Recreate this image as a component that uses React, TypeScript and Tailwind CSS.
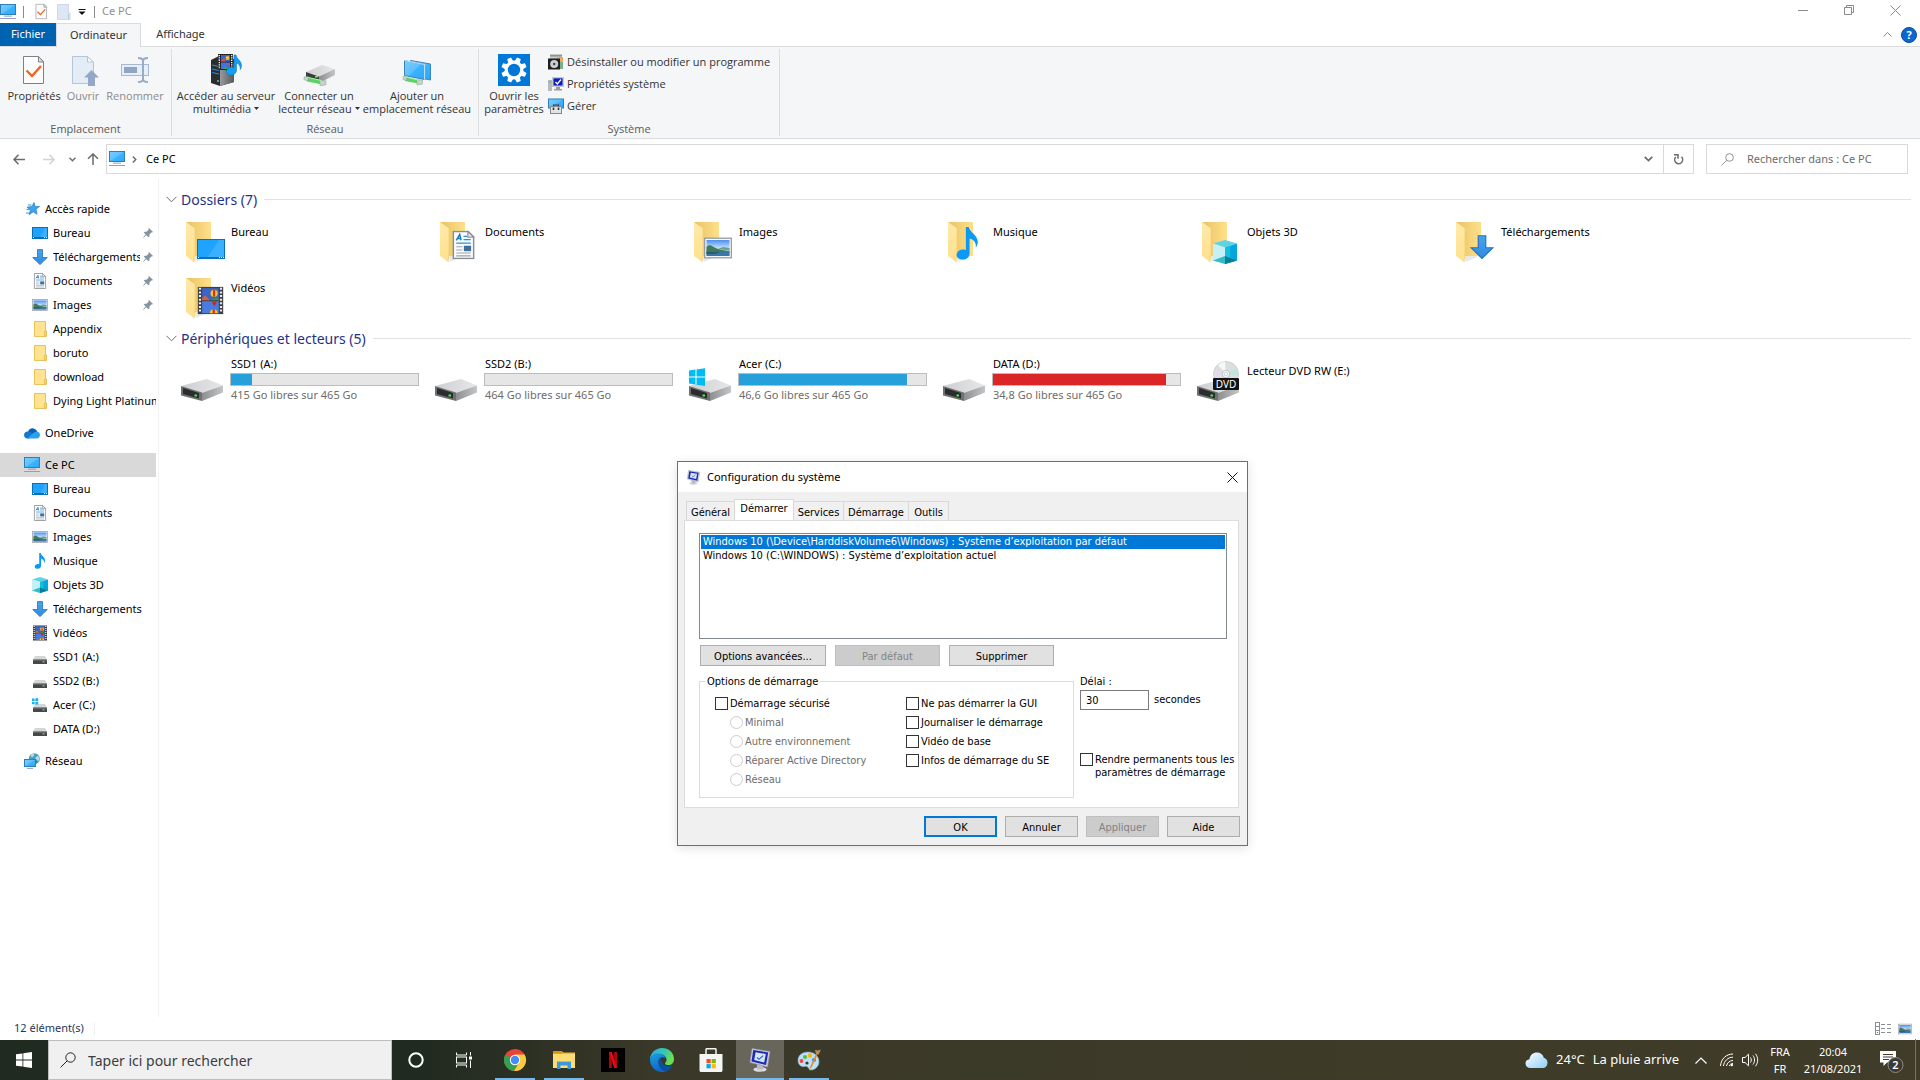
import React from "react";

type Draw = { size?: number };

/* ---------- shared gradients ---------- */

function Gradients() {
  return (
    <svg width="0" height="0" className="absolute" aria-hidden="true">
      <defs>
        <linearGradient id="screen" x1="0" y1="0" x2="1" y2="1">
          <stop offset="0" stopColor="#7cccff" />
          <stop offset="0.5" stopColor="#5cc0ff" />
          <stop offset="0.52" stopColor="#3db3ff" />
          <stop offset="1" stopColor="#2aa7fb" />
        </linearGradient>
        <linearGradient id="folderBack" x1="0" y1="0" x2="1" y2="0">
          <stop offset="0" stopColor="#e9c263" />
          <stop offset="1" stopColor="#ffe08a" />
        </linearGradient>
        <linearGradient id="folderFront" x1="0" y1="0" x2="0" y2="1">
          <stop offset="0" stopColor="#ffeaab" />
          <stop offset="1" stopColor="#ffe08b" />
        </linearGradient>
        <linearGradient id="metalTop" x1="0" y1="0" x2="1" y2="0">
          <stop offset="0" stopColor="#cfcfd1" />
          <stop offset="1" stopColor="#e6e7e9" />
        </linearGradient>
        <linearGradient id="metalSide" x1="0" y1="0" x2="1" y2="0">
          <stop offset="0" stopColor="#8d8e90" />
          <stop offset="1" stopColor="#c4c5c7" />
        </linearGradient>
        <linearGradient id="arrowBlue" x1="0" y1="0" x2="0" y2="1">
          <stop offset="0" stopColor="#4aa3ea" />
          <stop offset="1" stopColor="#2f8ae0" />
        </linearGradient>
        <linearGradient id="sky" x1="0" y1="0" x2="0" y2="1">
          <stop offset="0" stopColor="#4c8ff0" />
          <stop offset="0.55" stopColor="#cfe6fb" />
          <stop offset="1" stopColor="#d9ecf8" />
        </linearGradient>
        <linearGradient id="cloud" x1="0" y1="0" x2="1" y2="1">
          <stop offset="0" stopColor="#ffffff" />
          <stop offset="1" stopColor="#8ccdf5" />
        </linearGradient>
        <linearGradient id="edgeGreen" x1="0" y1="0" x2="1" y2="0.4">
          <stop offset="0" stopColor="#2aa7de" />
          <stop offset="0.6" stopColor="#35c7b4" />
          <stop offset="1" stopColor="#6be04c" />
        </linearGradient>
        <linearGradient id="edgeBlue" x1="0" y1="0" x2="0.4" y2="1">
          <stop offset="0" stopColor="#1b9de2" />
          <stop offset="1" stopColor="#1067c4" />
        </linearGradient>
        <linearGradient id="server" x1="0" y1="0" x2="1" y2="0">
          <stop offset="0" stopColor="#9a9a9c" />
          <stop offset="1" stopColor="#57585a" />
        </linearGradient>
      </defs>
    </svg>
  );
}

/* ---------- 16px icons ---------- */

function Monitor({ size = 16 }: Draw) {
  return (
    <svg width={size} height={size} viewBox="0 0 16 16" className="shrink-0">
      <rect x="0.5" y="0.5" width="15" height="10" fill="url(#screen)" stroke="#2f7fb5" />
      <rect x="4" y="11.6" width="8" height="1" fill="#8c9db5" />
      <rect x="0" y="14" width="16" height="1" fill="#8fa3c0" />
    </svg>
  );
}

function Desktop({ size = 16 }: Draw) {
  return (
    <svg width={size} height={size} viewBox="0 0 16 16" className="shrink-0">
      <rect x="0.5" y="2.5" width="15" height="11" fill="#1ea3ff" stroke="#0a6fb8" />
      <path d="M8 13L13 3h2v10z" fill="#39b1ff" />
      <path d="M1 12.5h14" stroke="#0a6fb8" />
      <path d="M1 12.5h1M12 12.5h1M14 12.5h1" stroke="#fff" />
    </svg>
  );
}

function Download({ size = 16 }: Draw) {
  return (
    <svg width={size} height={size} viewBox="0 0 16 16" className="shrink-0">
      <path d="M5.5 0.5h5v8h4.8L8 15.6 0.7 8.5h4.8z" fill="url(#arrowBlue)" stroke="#2374c4" strokeWidth="0.8" />
    </svg>
  );
}

function Doc({ size = 16 }: Draw) {
  return (
    <svg width={size} height={size} viewBox="0 0 16 16" className="shrink-0">
      <path d="M2.4 0.5h8.2l3 3v12H2.4z" fill="#fbfcfd" stroke="#878d94" strokeWidth="0.8" />
      <path d="M10.4 0.5v3.2h3.2z" fill="#dfe3e8" stroke="#878d94" strokeWidth="0.6" />
      <path d="M4 5.4L5.9 2.2l0.8 3.2M4.6 4.4h2" fill="none" stroke="#1878c8" strokeWidth="0.8" />
      <path d="M8 3.2h2M8 5h4M4 7h8" stroke="#2a8fda" strokeWidth="0.7" />
      <path d="M4 9h3.4M4 10.8h3.4M4 12.4h8M4 14h8" stroke="#9aa1a8" strokeWidth="0.6" />
      <rect x="8.2" y="8.4" width="4" height="3" fill="#3d6f9f" />
    </svg>
  );
}

function Picture({ size = 16 }: Draw) {
  return (
    <svg width={size} height={size} viewBox="0 0 16 16" className="shrink-0">
      <rect x="0.4" y="2.4" width="15.2" height="11.2" fill="#fff" stroke="#8f969c" strokeWidth="0.7" />
      <rect x="1.4" y="3.4" width="13.2" height="9.2" fill="url(#sky)" />
      <path d="M1.4 7.4c1.2-1.4 2.4-1.2 3.600-0.200 2 1.400 5 2 9.600 2.600v0.800H1.4z" fill="#3f7a5a" />
      <path d="M8 8.400l3-1 3.600 0.600v1.600z" fill="#6d9c93" />
      <rect x="1.4" y="10" width="13.2" height="2.600" fill="#3a76a8" />
      <path d="M1.4 10.200h8l-3 1.200h-5z" fill="#2c5f66" />
    </svg>
  );
}

function SmallFolder() {
  return (
    <svg width="16" height="16" viewBox="0 0 16 16" className="shrink-0">
      <path d="M2.5 0.5h11v9.5h1v5.5H2.5z" fill="#ffe391" stroke="#e8c35a" />
      <path d="M12.5 15V10.5h1.5V15z" fill="#fff0bd" stroke="#e3b94a" strokeWidth="0.8" />
    </svg>
  );
}

function Music({ size = 16 }: Draw) {
  return (
    <svg width={size} height={size} viewBox="0 0 16 16" className="shrink-0">
      <path d="M7.2 0h1.4c0.3 2.4 4.4 4 4.4 7.2 0 1.2-0.5 2.2-1 3 0.3-2.4-0.7-4-3-4.6v7.2c0 1.8-1.4 3-3.3 3-1.8 0-3-0.9-3-2.3 0-1.6 1.6-2.6 3.3-2.6 0.5 0 0.8 0 1.2 0.2z" fill="#0a9af5" />
    </svg>
  );
}

function Cube({ size = 16 }: Draw) {
  return (
    <svg width={size} height={size} viewBox="0 0 16 16" className="shrink-0">
      <path d="M8 0l8 2.4L8 5 0 2.4z" fill="#5fd3e4" />
      <path d="M0 2.4L8 5v8.4L8 16l-8-2.4z" fill="#c6f1f4" />
      <path d="M16 2.4L8 5v11l8-2.4z" fill="#07a5de" />
      <path d="M8 5l3.5-1.1v8.4L8 11z" fill="#13bfe0" />
      <path d="M8 10.6l8 3L8 16l-8-2.4z" fill="#36b9c9" />
      <path d="M8 10.6l8 3L8 16z" fill="#077f96" />
    </svg>
  );
}

function Film({ size = 16 }: Draw) {
  return (
    <svg width={size} height={size} viewBox="0 0 16 16" className="shrink-0">
      <rect x="1" y="0.5" width="14" height="15" fill="#3f3f40" />
      <path d="M2.2 1v14M13.8 1v14" stroke="#e9e9e9" strokeWidth="1.2" strokeDasharray="1.1 0.9" />
      <rect x="3.4" y="1.2" width="9.200" height="6.6" fill="#3c63c8" />
      <rect x="3.4" y="8.4" width="9.200" height="6.6" fill="#4a7be0" />
      <path d="M3.4 6.6l1.600-1.200 1.400 1 1.200 1.400H3.4z" fill="#d8632f" />
      <path d="M8 7.800c1-1 3-1.200 4.600-0.800v0.800z" fill="#2e9c45" />
      <circle cx="10" cy="4" r="2" fill="#f5c62a" />
      <path d="M9.400 2.100h1.2v3.8H9.400z" fill="#cf3322" />
      <path d="M8.600 8.6h3l-1.400 2.6z" fill="#c22a1e" />
      <path d="M7.600 15c0-1.400 1-2.200 2.200-2.200s2.200 0.800 2.200 2.200z" fill="#f5c62a" />
      <path d="M9.200 12.8h1.2V15H9.200z" fill="#cf3322" />
    </svg>
  );
}

function SmallDrive({ windows = false }: { windows?: boolean }) {
  return (
    <svg width="16" height="16" viewBox="0 0 16 16" className="shrink-0">
      <path d="M3 7h10l2 4H1z" fill="#d5d6d8" />
      <rect x="1" y="10.5" width="14" height="4.5" rx="0.6" fill="#47484a" />
      <rect x="1" y="10.5" width="14" height="0.9" fill="#8a8b8d" />
      <rect x="10.6" y="12.2" width="1.8" height="1.2" fill="#5df05a" />
      {windows && <path d="M0 1.4h2.6V4H0zM3.4 1.2h2.8V4H3.4zM0 4.8h2.6v2.4H0zM3.4 4.8h2.8v2.6H3.4z" fill="#13b4ee" />}
    </svg>
  );
}

function Network() {
  return (
    <svg width="16" height="16" viewBox="0 0 16 16" className="shrink-0">
      <circle cx="10.3" cy="5.7" r="5.5" fill="#4b9cbd" />
      <path d="M6.5 2.2c1.4-1.6 3-2 4-2l-0.8 3-2 1.4zM11 5l3-2.5 1.4 2.8-1.2 3z" fill="#b4dbe6" />
      <path d="M10 7.5l3 0.5-0.6 2.4z" fill="#2c6f96" />
      <rect x="0.5" y="6.5" width="11" height="7" fill="url(#screen)" stroke="#2f7fb5" />
      <path d="M3 15.4h6" stroke="#8fa3c0" />
    </svg>
  );
}

function QuickStar() {
  return (
    <svg width="16" height="16" viewBox="0 0 16 16" className="shrink-0">
      <path d="M10 1.500l1 3.900h4.600l-3.600 2.800 1 5-3.800-2.400-4 3 1.200-4.800L3 6.200l4.800-0.600z" fill="#3aa5ec" stroke="#1f7cc4" strokeWidth="0.7" />
      <path d="M4 4h3.500M2.500 8.400h3M2 12h3.500" stroke="#2f93dc" />
    </svg>
  );
}

function OneDrive() {
  return (
    <svg width="16" height="16" viewBox="0 0 16 16" className="shrink-0">
      <path d="M4 6.6C5 4.2 7.2 3 9.4 3.4c2 0.3 3.4 1.7 4 3.4L8 10z" fill="#0a5fb4" />
      <path d="M0 10c0-2.2 1.8-3.8 4-3.6 1-0.1 2 0.3 3 1l4.6 3L5 13.4H3.4C1.4 13.4 0 12 0 10z" fill="#1677cf" />
      <path d="M13.2 6.7c1.6 0.2 2.8 1.5 2.8 3.3 0 1.9-1.4 3.4-3.3 3.4H3.2L9 8.2c1-1 2.4-1.7 4.2-1.5z" fill="#28a0ea" />
    </svg>
  );
}

function Pin() {
  return (
    <svg width="10" height="10" viewBox="0 0 10 10" className="shrink-0">
      <path d="M6 0l4 4-1 0.6L8.4 4.4 6.4 6.6v1.9l-0.9 0.7L3.5 7.2 0.4 9.8 0 9.6 2.7 6.4 0.8 4.6l0.8-0.9h1.9L5.6 1.7 5.4 0.8z" fill="#8494a0" />
    </svg>
  );
}

function Magnifier({ size, color }: { size: number; color: string }) {
  return (
    <svg width={size} height={size} viewBox="0 0 16 16" className="shrink-0" fill="none" stroke={color}>
      <circle cx="10.5" cy="5.5" r="4.7" />
      <path d="M7 9L0.6 15.4" />
    </svg>
  );
}

function CheckDoc({ size = 16 }: Draw) {
  return (
    <svg width={size} height={size} viewBox="0 0 32 32" className="shrink-0">
      <path d="M5.5 2.5h15l5 5v22h-20z" fill="#fcfcfd" stroke="#7d8084" />
      <path d="M20.5 2.5V8h5z" fill="#e3e5e8" stroke="#7d8084" />
      <path d="M8.5 16.5l5.5 5.500L23 12" fill="none" stroke="#f4631e" strokeWidth="2.4" />
    </svg>
  );
}

/* ---------- ribbon icons ---------- */

function OpenIcon() {
  return (
    <svg width="32" height="32" viewBox="0 0 32 32">
      <path d="M5.5 2.5h15l6 6v21h-21z" fill="#e4ecf6" stroke="#b3c4dc" />
      <path d="M20.5 2.5V8h6z" fill="#fff" stroke="#b3c4dc" />
      <path d="M24.5 16l7.5 7.5h-4V32h-7v-8.5h-4z" fill="#93a8c6" />
    </svg>
  );
}

function RenameIcon() {
  return (
    <svg width="32" height="32" viewBox="0 0 32 32" fill="none">
      <rect x="2.5" y="10.5" width="27" height="11" fill="#e7eef7" stroke="#a6b9d4" />
      <rect x="5" y="13" width="13" height="6" fill="#8fa5c4" />
      <path d="M19 4c3.5 0 5 0.5 5 3v18c0 2.5-1.5 3-5 3M29 4c-3.5 0-5 0.5-5 3v18c0 2.5 1.5 3 5 3" stroke="#98abc8" strokeWidth="2" />
    </svg>
  );
}

function MediaServerIcon() {
  return (
    <svg width="32" height="32" viewBox="0 0 32 32">
      <path d="M1 6l8-4 15 3v23l-14 4-9-3z" fill="#2b2c2e" />
      <path d="M10 13l14-4v19l-14 4z" fill="url(#server)" />
      <path d="M2 11l7 1.5M2 15l7 1.5M2 18.5l7 1.5" stroke="#1f8fe8" strokeWidth="1.2" />
      <circle cx="8" cy="27" r="0.9" fill="#4cd9ff" />
      <rect x="8" y="0" width="15" height="16" fill="#252525" />
      <path d="M9.3 1v14M21.7 1v14" stroke="#f0f0f0" strokeWidth="1.4" strokeDasharray="1.3 1" />
      <rect x="11" y="1" width="9" height="6.5" fill="#3765d6" />
      <rect x="11" y="8.5" width="9" height="6.5" fill="#3d74e2" />
      <path d="M11 6l3-2 2 3.5h-5zM16 9h3l-1.5 3z" fill="#e34831" />
      <circle cx="17.5" cy="4" r="1.9" fill="#f6c529" />
      <path d="M13 15l2-2 3 2z" fill="#3fae4a" />
      <path d="M24 1h2c0.5 4 5.5 5.5 5.5 10.5 0 1.5-0.5 2.8-1.2 4C30.500 12 29 9.5 26.500 9v7c0 3-2.400 5-5.400 5-2.700 0-4.600-1.300-4.600-3.400 0-2.600 2.600-4.200 5.200-4.200 0.900 0 1.600 0.200 2.300 0.500z" fill="#159ff2" stroke="#0b7ccb" strokeWidth="0.6" />
    </svg>
  );
}

function MapDriveIcon() {
  return (
    <svg width="32" height="32" viewBox="0 0 32 32">
      <path d="M3 18l16-7 13 4-15 7.5z" fill="url(#metalTop)" />
      <path d="M3 18l13 4.5v7L3 25z" fill="#3c3d3f" />
      <path d="M16 22.5L32 15v6l-16 8z" fill="url(#metalSide)" />
      <rect x="12" y="22" width="3" height="1.5" fill="#5df05a" />
      <path d="M3 23l14 3v4L4 27.5z" fill="#5bd263" />
      <path d="M1 23l4-0.6v4.4l-4-1zM17 26l6 0.8v4L17 32z" fill="#c8d3cb" stroke="#8ba391" strokeWidth="0.5" />
      <path d="M5 23.4l13 3" stroke="#b7f0b8" />
    </svg>
  );
}

function AddPlaceIcon() {
  return (
    <svg width="32" height="32" viewBox="0 0 32 32">
      <path d="M9.500 6.500l20 3.500v16l-20-4z" fill="url(#screen)" stroke="#3a86b8" />
      <path d="M3.500 6.500l20 4v15l-20-4z" fill="url(#screen)" stroke="#3a86b8" />
      <path d="M3.500 6.500l20 4v15" fill="none" stroke="#e6f5ff" strokeWidth="0.8" />
      <path d="M4 22.5l13 3v4l-13-2.5z" fill="#5bd263" />
      <path d="M2 22.5l3.5-0.5v4.4L2 25.5zM16 25.5l5.5 0.8v3.7L16 31z" fill="#c8d3cb" stroke="#8ba391" strokeWidth="0.5" />
      <path d="M5 23l12 3" stroke="#b7f0b8" />
    </svg>
  );
}

function GearTile() {
  return (
    <svg width="32" height="32" viewBox="0 0 32 32">
      <rect width="32" height="32" fill="#0078d7" />
      <g fill="#fff">
        {[22.5, 67.5, 112.5, 157.5, 202.5, 247.5, 292.5, 337.5].map((a) => (
          <path key={a} d="M13.2 8l0.8-4.700h4L18.8 8z" transform={`rotate(${a} 16 16)`} />
        ))}
      </g>
      <circle cx="16" cy="16" r="7.8" fill="none" stroke="#fff" strokeWidth="3.2" />
    </svg>
  );
}

function UninstallIcon() {
  return (
    <svg width="16" height="16" viewBox="0 0 16 16">
      <path d="M2 0h12v6H2z" fill="#c8cac9" />
      <path d="M2 1h12v1.5H2z" fill="#8f9492" />
      <path d="M9 3h6v12H9z" fill="#f0a95a" />
      <path d="M12 8h3v7h-3z" fill="#7fae8c" />
      <rect x="0" y="4.5" width="12" height="11" fill="#1e1f20" />
      <circle cx="6.2" cy="10" r="4" fill="#cdd0d2" />
      <circle cx="6.2" cy="10" r="1.2" fill="#3b3c3d" />
    </svg>
  );
}

function SystemIcon() {
  return (
    <svg width="16" height="16" viewBox="0 0 16 16">
      <rect x="0" y="4" width="4" height="11" fill="#b7b9bc" />
      <path d="M1 6h2" stroke="#37c84a" />
      <rect x="4" y="1" width="12" height="10" fill="#c7c9cd" />
      <rect x="5.5" y="2.3" width="9" height="7.2" fill="#0f1ac2" />
      <path d="M7.500 6l1.800 2 3.700-4.500" stroke="#fff" strokeWidth="1.3" fill="none" />
      <path d="M8 11h4v2h2v1.5H6V13h2z" fill="#9b9da1" />
    </svg>
  );
}

function ManageIcon() {
  return (
    <svg width="16" height="16" viewBox="0 0 16 16">
      <rect x="0.5" y="1" width="15" height="9" fill="url(#screen)" stroke="#2f7fb5" />
      <path d="M5.5 8.5V7h5v1.5" fill="none" stroke="#3a3d40" strokeWidth="1.2" />
      <rect x="2.5" y="8.5" width="11" height="7" fill="#e1e4e6" stroke="#84898e" />
      <path d="M5.5 9.5v2.5M10.5 9.5v2.5" stroke="#33363a" strokeWidth="1.6" />
    </svg>
  );
}

/* ---------- 48px icons ---------- */

function BigFolder({ children }: { children: React.ReactNode }) {
  return (
    <svg width="48" height="48" viewBox="0 0 48 48" className="shrink-0">
      <path d="M14 38h15l-13 6z" fill="#e9e9e9" />
      <path d="M6 4h25v34H12z" fill="url(#folderBack)" />
      <path d="M6 4l9 6.5v24.5l-1 9L6 38z" fill="url(#folderFront)" />
      <path d="M15 10.5v25l-1 8.5" fill="none" stroke="#f3cf72" strokeWidth="0.8" />
      {children}
    </svg>
  );
}

function BigDrive({ windows = false, dvd = false }: { windows?: boolean; dvd?: boolean }) {
  return (
    <svg width="48" height="48" viewBox="0 0 48 48" className="shrink-0">
      <path d="M1 29l26-7 16 6.5-21 9z" fill="url(#metalTop)" />
      <path d="M1 29l21 6.5V44L1 38.5z" fill="#6f7072" />
      <path d="M3 31l16 5v5.5L3 37z" fill="#2b2c2d" />
      <path d="M22 36l21-7.5v7L22 44z" fill="url(#metalSide)" />
      <rect x="14.5" y="37.5" width="2.5" height="2" fill="#4af04a" />
      {windows && <path d="M1 13.5l6.5-0.9v7H1zM8.5 12.5l8.5-1.2v8.3H8.5zM1 20.5h6.5v7L1 26.6zM8.5 20.5H17V29l-8.5-1.2z" fill="#00bcf2" />}
      {dvd && (
        <>
          <circle cx="30" cy="17" r="12.5" fill="#dcdfe0" stroke="#b9bcbe" strokeWidth="0.6" />
          <path d="M30 17L22 8a12 12 0 0 1 7-3.3z" fill="#f7f7f8" />
          <path d="M30 17l10-6a12 12 0 0 1 2 7z" fill="#bfe8dd" />
          <path d="M30 17L18.5 14a12 12 0 0 0 0 6z" fill="#e7d8ee" />
          <circle cx="30" cy="17" r="3.8" fill="#f2f3f3" stroke="#b4b7b9" strokeWidth="0.8" />
          <circle cx="30" cy="17" r="1.6" fill="#fff" stroke="#b4b7b9" strokeWidth="0.6" />
          <rect x="17" y="21" width="26" height="12" rx="1" fill="#131313" />
          <text x="30" y="31" textAnchor="middle" fontSize="10" fill="#fff" fontFamily="Noto Sans, sans-serif">DVD</text>
        </>
      )}
    </svg>
  );
}

/* ---------- system configuration glyph ---------- */

function ConfigIcon({ size = 16 }: Draw) {
  return (
    <svg width={size} height={size} viewBox="0 0 24 24" className="shrink-0">
      <ellipse cx="12" cy="21.5" rx="6.5" ry="2.3" fill="#d9dbe0" />
      <path d="M9 16l6 1v4.5H9z" fill="#b8bbc2" />
      <path d="M4 0.500l18 3-2.500 15.500L2 14.5z" fill="#ccd0da" stroke="#9397a6" strokeWidth="0.6" />
      <path d="M5.200 2l15 2.500-2.200 12.500L3.500 13.500z" fill="#1d28b4" />
      <path d="M7.600 4.300l10.200 1.700-1.600 8.500L6.200 12z" fill="#d6e6fa" />
      <path d="M9 9.500l2 1.700 4.200-3.600" fill="none" stroke="#2a63d0" strokeWidth="1.100" />
    </svg>
  );
}

/* ---------- ribbon ---------- */

function RibbonButton({ icon, lines, width, disabled, menu }: { icon: React.ReactNode; lines: string[]; width: string; disabled?: boolean; menu?: boolean }) {
  return (
    <button disabled={disabled} className={`flex flex-col items-center whitespace-nowrap ${width} ${disabled ? "text-[#8b8b8b]" : "text-[#333]"}`}>
      <span className="mb-[3px] block h-8 w-8">{icon}</span>
      {lines.map((l, i) => (
        <span key={l} className="flex h-[13px] items-center gap-[3px] leading-[13px]">
          {l}
          {menu && i === lines.length - 1 && (
            <svg width="5" height="3" viewBox="0 0 5 3"><path d="M0 0h5L2.5 3z" fill="#333" /></svg>
          )}
        </span>
      ))}
    </button>
  );
}

function RibbonGroup({ label, children, width, inset }: { label: string; children: React.ReactNode; width: string; inset: string }) {
  return (
    <section className={`my-[2px] flex flex-col border-r border-[#dcdddf] ${width}`}>
      <div className={`flex flex-1 pt-[5px] ${inset}`}>{children}</div>
      <div className="h-[15px] text-center leading-[15px] text-[#5a5a5a]">{label}</div>
    </section>
  );
}

function SmallCommand({ icon, label }: { icon: React.ReactNode; label: string }) {
  return (
    <button className="flex h-[22px] items-center gap-[3px] whitespace-nowrap text-[#333]">
      {icon}
      {label}
    </button>
  );
}

/* ---------- navigation pane ---------- */

type NavEntry = { label: string; icon: React.ReactNode; root?: boolean; pinned?: boolean; selected?: boolean };

const navGroups: NavEntry[][] = [
  [
    { label: "Accès rapide", icon: <QuickStar />, root: true },
    { label: "Bureau", icon: <Desktop />, pinned: true },
    { label: "Téléchargements", icon: <Download />, pinned: true },
    { label: "Documents", icon: <Doc />, pinned: true },
    { label: "Images", icon: <Picture />, pinned: true },
    { label: "Appendix", icon: <SmallFolder /> },
    { label: "boruto", icon: <SmallFolder /> },
    { label: "download", icon: <SmallFolder /> },
    { label: "Dying Light Platinum", icon: <SmallFolder /> },
  ],
  [{ label: "OneDrive", icon: <OneDrive />, root: true }],
  [
    { label: "Ce PC", icon: <Monitor />, root: true, selected: true },
    { label: "Bureau", icon: <Desktop /> },
    { label: "Documents", icon: <Doc /> },
    { label: "Images", icon: <Picture /> },
    { label: "Musique", icon: <Music /> },
    { label: "Objets 3D", icon: <Cube /> },
    { label: "Téléchargements", icon: <Download /> },
    { label: "Vidéos", icon: <Film /> },
    { label: "SSD1 (A:)", icon: <SmallDrive /> },
    { label: "SSD2 (B:)", icon: <SmallDrive /> },
    { label: "Acer (C:)", icon: <SmallDrive windows /> },
    { label: "DATA (D:)", icon: <SmallDrive /> },
  ],
  [{ label: "Réseau", icon: <Network />, root: true }],
];

function NavPane() {
  return (
    <nav className="flex w-[159px] shrink-0 flex-col gap-2 border-r border-[#f2f2f2] pt-[18px] pr-[2px]">
      {navGroups.map((g, i) => (
        <ul key={i}>
          {g.map((n) => (
            <li key={n.label}>
              <a href="#" className={`flex h-6 items-center gap-[5px] whitespace-nowrap ${n.root ? "pl-6" : "pl-8"} ${n.selected ? "bg-[#d9d9d9]" : ""}`}>
                {n.icon}
                <span className="flex-1 overflow-hidden">{n.label}</span>
                {n.pinned && <span className="mr-[3px] ml-[-2px]"><Pin /></span>}
              </a>
            </li>
          ))}
        </ul>
      ))}
    </nav>
  );
}

/* ---------- content ---------- */

const folders: { label: string; icon: React.ReactNode }[] = [
  {
    label: "Bureau",
    icon: (
      <BigFolder>
        <rect x="17.5" y="21.5" width="27" height="19" fill="#1ea3ff" stroke="#0a6fb8" />
        <path d="M27 40L39 22h5v18z" fill="#39b1ff" />
        <path d="M18 39.5h26" stroke="#0a6fb8" />
        <path d="M18 39.5h1M39 39.5h1M41 39.5h1M43 39.5h1" stroke="#fff" />
      </BigFolder>
    ),
  },
  { label: "Documents", icon: <BigFolder><g transform="translate(15 12.5)"><Doc size={29} /></g></BigFolder> },
  { label: "Images", icon: <BigFolder><g transform="translate(16 16)"><Picture size={28} /></g></BigFolder> },
  { label: "Musique", icon: <BigFolder><g transform="translate(9 9)"><Music size={33} /></g></BigFolder> },
  { label: "Objets 3D", icon: <BigFolder><g transform="translate(17 22)"><Cube size={24} /></g></BigFolder> },
  { label: "Téléchargements", icon: <BigFolder><g transform="translate(20 17)"><Download size={24} /></g></BigFolder> },
  { label: "Vidéos", icon: <BigFolder><g transform="translate(16 12)"><Film size={29} /></g></BigFolder> },
];

const drives = [
  { label: "SSD1 (A:)", info: "415 Go libres sur 465 Go", used: 11, fill: "bg-[#26a0da]" },
  { label: "SSD2 (B:)", info: "464 Go libres sur 465 Go", used: 0, fill: "bg-[#26a0da]" },
  { label: "Acer (C:)", info: "46,6 Go libres sur 465 Go", used: 90, fill: "bg-[#26a0da]", windows: true },
  { label: "DATA (D:)", info: "34,8 Go libres sur 465 Go", used: 92.5, fill: "bg-[#da2626]" },
];

function GroupHeader({ label }: { label: string }) {
  return (
    <h2 className="flex h-6 items-center pr-[9px] pl-[7px] text-[14px] text-[#1e3287]">
      <svg width="11" height="7" viewBox="0 0 11 7" className="mr-1 shrink-0"><path d="M0.5 0.8l5 5 5-5" fill="none" stroke="#6d6d6d" /></svg>
      <span className="whitespace-nowrap">{label}</span>
      <span className="ml-[7px] h-px flex-1 bg-[#e2e2e2]" />
    </h2>
  );
}

function Content() {
  return (
    <main className="min-w-0 flex-1 pt-2">
      <GroupHeader label="Dossiers (7)" />
      <ul className="mt-[3px] grid grid-cols-[repeat(auto-fill,254px)] pl-[21px]">
        {folders.map((f) => (
          <li key={f.label} className="flex h-14 pt-1">
            {f.icon}
            <span className="pt-[6px] pl-[3px] leading-4">{f.label}</span>
          </li>
        ))}
      </ul>
      <GroupHeader label="Périphériques et lecteurs (5)" />
      <ul className="mt-[3px] grid grid-cols-[repeat(auto-fill,254px)] pl-[21px]">
        {drives.map((d) => (
          <li key={d.label} className="flex h-14 pt-1">
            <BigDrive windows={d.windows} />
            <div className="-mt-px ml-[2px] w-[189px]">
              <div className="pl-px leading-4">{d.label}</div>
              <div className="mt-px h-[13px] border border-[#bcbcbc] bg-[#e6e6e6]">
                <div className={`h-full ${d.fill}`} style={{ width: `${d.used}%` }} />
              </div>
              <div className="mt-px pl-px leading-4 text-[#6d6d6d]">{d.info}</div>
            </div>
          </li>
        ))}
        <li className="flex h-14 pt-1">
          <BigDrive dvd />
          <span className="pt-[6px] pl-[3px] leading-4">Lecteur DVD RW (E:)</span>
        </li>
      </ul>
    </main>
  );
}

/* ---------- system configuration window ---------- */

function DialogButton({ label, width, disabled, primary }: { label: string; width: string; disabled?: boolean; primary?: boolean }) {
  return (
    <button
      disabled={disabled}
      className={`h-[21px] pt-[2px] leading-[15px] whitespace-nowrap ${width} ${disabled ? "border border-[#bfbfbf] bg-[#cccccc] text-[#838383]" : primary ? "border-2 border-[#0078d7] bg-[#e1e1e1]" : "border border-[#adadad] bg-[#e1e1e1]"}`}
    >
      {label}
    </button>
  );
}

function Check({ label }: { label: string }) {
  return (
    <label className="flex items-start gap-[2px] leading-[13px]">
      <input type="checkbox" className="h-[13px] w-[13px] shrink-0 appearance-none border border-[#333] bg-white" />
      <span className="whitespace-pre">{label}</span>
    </label>
  );
}

function DisabledRadio({ label }: { label: string }) {
  return (
    <label className="ml-[15px] flex items-start gap-[2px] leading-[13px] text-[#6d6d6d]">
      <input type="radio" name="safe-boot" disabled className="h-[13px] w-[13px] shrink-0 appearance-none rounded-full border border-[#cccccc] bg-white" />
      <span className="whitespace-nowrap">{label}</span>
    </label>
  );
}

function ConfigDialog() {
  const tab = "h-[19px] border border-[#d9d9d9] bg-[#f0f0f0] pt-[2px] leading-[15px]";
  return (
    <section
      role="dialog"
      aria-label="Configuration du système"
      className="absolute top-[461px] left-[677px] w-[571px] border border-[#6f6f6f] bg-[#f0f0f0] pb-2 font-['DejaVu_Sans_Condensed','Liberation_Sans',sans-serif] text-[11px] shadow-[0_2px_10px_rgba(0,0,0,0.12)]"
    >
      <header className="flex h-[30px] items-center bg-white pr-[9px] pl-2 font-['Noto_Sans',sans-serif] text-[11px]">
        <ConfigIcon size={15} />
        <h1 className="ml-[6px] flex-1">Configuration du système</h1>
        <button aria-label="Fermer">
          <svg width="11" height="11" viewBox="0 0 11 11"><path d="M0.5 0.5l10 10M10.5 0.5l-10 10" stroke="#111" /></svg>
        </button>
      </header>

      <div role="tablist" className="mt-[7px] flex h-[21px] items-end pl-2">
        <button role="tab" className={`w-[48px] border-r-0 border-b-0 ${tab}`}>Général</button>
        <button role="tab" aria-selected="true" className="z-10 h-[21px] w-[60px] border border-b-0 border-[#d9d9d9] bg-white pb-px">Démarrer</button>
        <button role="tab" className={`w-[50px] border-b-0 border-l-0 ${tab}`}>Services</button>
        <button role="tab" className={`w-[65px] border-b-0 border-l-0 ${tab}`}>Démarrage</button>
        <button role="tab" className={`w-[40px] border-b-0 border-l-0 ${tab}`}>Outils</button>
      </div>

      <div className="mr-2 ml-[6px] border border-[#dcdcdc] bg-white px-[11px] pt-3 pb-[9px]">
        <ul role="listbox" aria-label="Systèmes" className="ml-[3px] h-[106px] border border-[#828790] p-px">
          <li role="option" aria-selected="true" className="h-[14px] bg-[#0078d7] pl-[2px] leading-[14px] whitespace-nowrap text-white">
            Windows 10 (\Device\HarddiskVolume6\Windows) : Système d’exploitation par défaut
          </li>
          <li role="option" aria-selected="false" className="h-[13px] pl-[2px] leading-[13px] whitespace-nowrap">
            Windows 10 (C:\WINDOWS) : Système d’exploitation actuel
          </li>
        </ul>

        <div className="mt-[6px] ml-[4px] flex gap-[9px]">
          <DialogButton label="Options avancées..." width="w-[126px]" />
          <DialogButton label="Par défaut" width="w-[105px]" disabled />
          <DialogButton label="Supprimer" width="w-[105px]" />
        </div>

        <div className="mt-[9px] ml-[3px] flex">
          <fieldset className="flex h-[123px] w-[375px] shrink-0 border border-[#dcdcdc] pl-[15px]">
            <legend className="-ml-[10px] px-[2px] leading-[13px]">Options de démarrage</legend>
            <div className="flex w-[191px] flex-col gap-[6px] pt-[9px]">
              <Check label="Démarrage sécurisé" />
              <DisabledRadio label="Minimal" />
              <DisabledRadio label="Autre environnement" />
              <DisabledRadio label="Réparer Active Directory" />
              <DisabledRadio label="Réseau" />
            </div>
            <div className="flex flex-col gap-[6px] pt-[9px]">
              <Check label="Ne pas démarrer la GUI" />
              <Check label="Journaliser le démarrage" />
              <Check label="Vidéo de base" />
              <Check label="Infos de démarrage du SE" />
            </div>
          </fieldset>
          <div className="ml-[6px]">
            <label htmlFor="delay" className="block leading-[13px]">Délai :</label>
            <div className="mt-[2px] flex items-center gap-[5px]">
              <input id="delay" defaultValue="30" className="h-5 w-[69px] border border-[#7a7a7a] bg-white pl-[5px]" />
              secondes
            </div>
            <div className="mt-[43px]">
              <Check label={"Rendre permanents tous les\nparamètres de démarrage"} />
            </div>
          </div>
        </div>
      </div>

      <footer className="mt-2 flex justify-end gap-2 pr-[7px]">
        <DialogButton label="OK" width="w-[73px]" primary />
        <DialogButton label="Annuler" width="w-[73px]" />
        <DialogButton label="Appliquer" width="w-[73px]" disabled />
        <DialogButton label="Aide" width="w-[73px]" />
      </footer>
    </section>
  );
}

/* ---------- taskbar ---------- */

function TaskButton({ label, children, state }: { label: string; children: React.ReactNode; state?: "open" | "active" }) {
  return (
    <button aria-label={label} className={`relative flex h-10 w-12 items-center justify-center ${state === "active" ? "bg-[#68665a]" : ""}`}>
      {children}
      {state && <span className={`absolute bottom-0 h-[2px] bg-[#76b9ed] ${state === "active" ? "inset-x-0" : "inset-x-1"}`} />}
    </button>
  );
}

function Taskbar() {
  return (
    <footer className="flex h-10 shrink-0 items-center bg-linear-to-r from-[#212a20] from-22% via-[#3a3828] via-34% to-[#403c29] text-white">
      <button aria-label="Démarrer" className="flex h-10 w-12 items-center justify-center">
        <svg width="16" height="16" viewBox="0 0 16 16"><path d="M0 2.3l6.5-0.9v6.1H0zM7.3 1.3L16 0v7.5H7.3zM0 8.4h6.5v6.1L0 13.7zM7.3 8.4H16V16l-8.7-1.3z" fill="#fff" /></svg>
      </button>
      <label className="flex h-10 w-[344px] items-center gap-3 border border-[#bdbdbd] bg-[#f0f0f0] pl-[11px]">
        <Magnifier size={16} color="#222" />
        <input aria-label="Rechercher" placeholder="Taper ici pour rechercher" className="w-full bg-transparent text-[14px] placeholder:text-[#3c3c3c]" />
      </label>
      <TaskButton label="Cortana">
        <svg width="16" height="16" viewBox="0 0 16 16"><circle cx="8" cy="8" r="6.7" fill="none" stroke="#fff" strokeWidth="2" /></svg>
      </TaskButton>
      <TaskButton label="Affichage des tâches">
        <svg width="16" height="16" viewBox="0 0 16 16" fill="none" stroke="#fff">
          <path d="M0.5 0.5V3h10V0.5M0.5 15.5V13h10v2.5M14.5 0v3.5M14.5 8.5V16" />
          <rect x="0.5" y="5" width="10" height="6" />
          <rect x="13" y="4.5" width="3" height="3" fill="#fff" stroke="none" />
        </svg>
      </TaskButton>
      <div className="ml-[3px] flex gap-px">
        <TaskButton label="Chrome" state="open">
          <svg width="24" height="24" viewBox="0 0 24 24">
            <circle cx="12" cy="12" r="11" fill="#e8443a" />
            <path d="M12 12L2.5 6.5A11 11 0 0 0 11 23l5-8.500z" fill="#30a252" />
            <path d="M12 12V6.500h9.500A11 11 0 0 1 11 23l5.500-9z" fill="#fbcd3b" />
            <circle cx="12" cy="12" r="5.2" fill="#fff" />
            <circle cx="12" cy="12" r="4.2" fill="#4a8af4" />
          </svg>
        </TaskButton>
        <TaskButton label="Explorateur de fichiers" state="open">
          <svg width="24" height="24" viewBox="0 0 24 24">
            <path d="M1 4V3h8.5l2 1.5H23V20H1z" fill="#f0b63d" />
            <path d="M1 3h8.5l1 2.5H1z" fill="#d99400" />
            <path d="M1 6h22v14H1z" fill="#fddc74" />
            <path d="M5 21v-6.5c0-0.8 0.5-1.5 1.5-1.5h11c1 0 1.5 0.7 1.5 1.5V21h-3.5v-3.5h-7V21z" fill="#3a99dc" />
            <path d="M5 13.5h14" stroke="#8ac4ea" />
          </svg>
        </TaskButton>
        <TaskButton label="Netflix">
          <svg width="24" height="24" viewBox="0 0 24 24">
            <rect width="24" height="24" fill="#000" />
            <path d="M8 4h2.8v16H8zM13.2 4H16v16h-2.8z" fill="#b1060f" />
            <path d="M8 4h2.8L16 20h-2.8z" fill="#e50914" />
          </svg>
        </TaskButton>
        <TaskButton label="Edge">
          <svg width="24" height="24" viewBox="0 0 24 24">
            <path d="M12 0C5 0 0.5 5 0 11c2-4 6-5 9.5-5 4 0 7 2.5 7 6 0 1.5-1.5 2.5-1.5 3.5 0 1 1.8 1.5 4 1.5 3 0 5-2.5 5-6C24 4.5 18.5 0 12 0z" fill="url(#edgeGreen)" />
            <path d="M0 11c0-3 3.5-5.5 8-5.5 4 0 7 2 7.5 4.5C13 8 8.5 9.5 8.5 14c0 5 4 9 8.5 9.3-1.5 0.5-3 0.7-5 0.7C5 24 0 18.5 0 11z" fill="url(#edgeBlue)" />
            <path d="M8.5 14c0-2 1-3.5 2.5-4.5-0.5 4 2.5 8 7 8.5 2 0.2 3.5-0.2 4.8-1-1.5 3-3.500 5.300-6.800 6.500C12 23 8.5 19 8.5 14z" fill="#0c50a0" />
          </svg>
        </TaskButton>
        <TaskButton label="Microsoft Store">
          <svg width="24" height="24" viewBox="0 0 24 24">
            <path d="M7 6V1.5C7 1 7.3 0.7 7.8 0.7h8.4c0.5 0 0.8 0.3 0.8 0.8V6" fill="none" stroke="#f3f3f3" strokeWidth="1.5" />
            <path d="M0.5 6h23v16.5c0 0.8-0.7 1.5-1.5 1.5H2c-0.8 0-1.5-0.7-1.5-1.5z" fill="#f4f4f4" />
            <path d="M7.5 11h4.2v4.2H7.5z" fill="#f25022" />
            <path d="M12.6 11h4.2v4.2h-4.2z" fill="#7fba00" />
            <path d="M7.5 16.1h4.2v4.2H7.5z" fill="#00a4ef" />
            <path d="M12.6 16.1h4.2v4.2h-4.2z" fill="#ffb900" />
          </svg>
        </TaskButton>
        <TaskButton label="Configuration du système" state="active"><ConfigIcon size={24} /></TaskButton>
        <TaskButton label="Paint" state="open">
          <svg width="24" height="24" viewBox="0 0 24 24">
            <path d="M11 4c6 0 11 4 11 9.5S17.5 22 14 22c-2.5 0-2-2.5-4-3.5-1.5-0.7-3 0.5-5 0-2.5-0.7-4-3-4-6C1 7.5 5 4 11 4z" fill="#bfe0f2" stroke="#7db0cc" strokeWidth="0.6" />
            <circle cx="4.5" cy="13" r="1.9" fill="#e5484d" />
            <circle cx="8" cy="9" r="2" fill="#58b947" />
            <circle cx="13" cy="7.5" r="2.2" fill="#f6b21b" />
            <circle cx="17" cy="12" r="2" fill="#3c86d8" />
            <circle cx="10" cy="15" r="1.6" fill="#2c3a44" />
            <path d="M12 23l1.5-5L19 6l1.5 0.8L15 18.5z" fill="#e38a30" />
            <path d="M19 6l-1-4 3 0.5 3-1-2.5 5.3z" fill="#b98b5e" />
          </svg>
        </TaskButton>
      </div>

      <div className="ml-auto flex items-center">
        <svg width="23" height="17" viewBox="0 0 23 17"><path d="M5.5 16C2.500 16 0.5 14 0.5 11.5S2 7.5 4.5 7.2C5 3.2 8 0.5 12 0.5c3.5 0 6 2 6.8 5.2 2.2 0.5 3.7 2.5 3.7 5 0 3-2 5.3-5 5.3z" fill="url(#cloud)" /></svg>
        <span className="ml-2 text-[13px]">24°C</span>
        <span className="ml-2 text-[13px]">La pluie arrive</span>
        <button aria-label="Icônes cachées" className="ml-4">
          <svg width="12" height="7" viewBox="0 0 12 7"><path d="M0.5 6.5L6 1l5.500 5.5" fill="none" stroke="#fff" strokeWidth="1.2" /></svg>
        </button>
        <svg width="14" height="14" viewBox="0 0 14 14" className="ml-[13px]" fill="none" stroke="#fff">
          <path d="M0.5 13C1 6 6 1 13 1M3.5 13C4 8 8 4.2 13 4.2M6.5 13c0.5-3 3-5.5 6.5-5.5M9.2 13c0.5-1.3 1.8-2.5 3.8-2.5" />
          <circle cx="11.8" cy="12" r="1.3" fill="#fff" stroke="none" />
        </svg>
        <svg width="17" height="14" viewBox="0 0 17 14" className="ml-[8px]" fill="none" stroke="#fff">
          <path d="M0.5 4.5H3l3.500-3.3v11.6L3 9.5H0.5zM8.5 4.5c1 1.5 1 3.500 0 5M11 2.5c2 2.700 2 6.300 0 9M13.5 0.8c2.900 3.700 2.900 8.700 0 12.400" />
        </svg>
        <div className="ml-[9px] w-6 text-center text-[11px] leading-[17px]">FRA<br />FR</div>
        <div className="ml-2 w-[66px] text-center text-[11px] leading-[17px]">20:04<br />21/08/2021</div>
        <button aria-label="Notifications" className="mr-1 ml-[14px] flex w-9 border-r border-[#77756a] py-[9px]">
          <svg width="25" height="25" viewBox="0 0 25 25">
            <path d="M0 3h16v11.5H7L3.5 18v-3.5H0z" fill="#fff" />
            <path d="M3 6.5h10M3 9h10M3 11.5h6" stroke="#403c29" />
            <circle cx="15.500" cy="17" r="7.500" fill="#3b3a35" stroke="#8d8b83" />
            <text x="15.500" y="21" textAnchor="middle" fontSize="11" fontWeight="600" fill="#fff" fontFamily="Noto Sans, sans-serif">2</text>
          </svg>
        </button>
      </div>
    </footer>
  );
}

/* ---------- page ---------- */

export default function App() {
  return (
    <div className="relative flex h-screen flex-col overflow-hidden bg-white font-['Noto_Sans',sans-serif] text-[11px] text-black">
      <Gradients />

      <header className="flex h-[23px] shrink-0 items-center">
        <Monitor />
        <span className="ml-[7px] h-3 w-px bg-[#8a8a8a]" />
        <button aria-label="Propriétés" className="ml-[9px]"><CheckDoc size={17} /></button>
        <button aria-label="Nouveau dossier" className="ml-[7px]">
          <svg width="14" height="16" viewBox="0 0 14 16"><path d="M0.5 0.5h11V9h1.5v6.5H0.5z" fill="#dde7f3" stroke="#ccd9ea" /><path d="M11.5 15v-5" stroke="#b9c9de" /></svg>
        </button>
        <button aria-label="Personnaliser" className="ml-[7px]">
          <svg width="8" height="6" viewBox="0 0 8 6"><path d="M0.5 0.5h7" stroke="#111" /><path d="M0.5 2.5h7L4 6z" fill="#111" /></svg>
        </button>
        <span className="ml-2 h-3 w-px bg-[#8a8a8a]" />
        <span className="ml-[7px] text-[#8f8f8f]">Ce PC</span>
        <div className="ml-auto flex pr-[2px] pb-[3px]">
          <button aria-label="Réduire" className="flex h-5 w-[46px] items-center justify-center">
            <svg width="10" height="10" viewBox="0 0 10 10"><path d="M0 5.5h10" stroke="#8a8a8a" /></svg>
          </button>
          <button aria-label="Restaurer" className="flex h-5 w-[46px] items-center justify-center">
            <svg width="10" height="10" viewBox="0 0 10 10" fill="none" stroke="#8a8a8a"><path d="M0.5 2.5h7v7h-7zM2.5 2.5v-2h7v7h-2" /></svg>
          </button>
          <button aria-label="Fermer la fenêtre" className="flex h-5 w-[46px] items-center justify-center">
            <svg width="11" height="11" viewBox="0 0 11 11"><path d="M0.5 0.5l10 10M10.5 0.5l-10 10" stroke="#8a8a8a" /></svg>
          </button>
        </div>
      </header>

      <div role="tablist" className="flex h-[23px] shrink-0">
        <button role="tab" className="w-14 bg-[#0063b1] text-white">Fichier</button>
        <button role="tab" aria-selected="true" className="z-10 -mb-px w-[85px] border border-b-0 border-[#dadbdc] bg-[#f5f6f7] text-[#333]">Ordinateur</button>
        <button role="tab" className="w-[79px] text-[#333]">Affichage</button>
        <div className="ml-auto flex items-center gap-[9px] pr-[3px]">
          <button aria-label="Réduire le ruban">
            <svg width="9" height="5" viewBox="0 0 9 5"><path d="M0.5 4.5l4-4 4 4" fill="none" stroke="#8a8a8a" /></svg>
          </button>
          <button aria-label="Aide de l’explorateur" className="h-4 w-4 rounded-full border border-[#0a4a8c] bg-[#0c68cf] text-[11px] leading-[14px] font-bold text-white">?</button>
        </div>
      </div>

      <div className="flex h-[93px] shrink-0 border-y border-[#dadbdc] bg-[#f5f6f7] font-['Open_Sans',sans-serif]">
        <RibbonGroup label="Emplacement" width="w-[172px]" inset="pl-[6px]">
          <RibbonButton icon={<CheckDoc size={32} />} lines={["Propriétés"]} width="w-[56px]" />
          <RibbonButton icon={<OpenIcon />} lines={["Ouvrir"]} width="w-[42px]" disabled />
          <RibbonButton icon={<RenameIcon />} lines={["Renommer"]} width="w-[62px]" disabled />
        </RibbonGroup>
        <RibbonGroup label="Réseau" width="w-[307px]" inset="pl-[2px]">
          <RibbonButton icon={<MediaServerIcon />} lines={["Accéder au serveur", "multimédia"]} width="w-[104px]" menu />
          <RibbonButton icon={<MapDriveIcon />} lines={["Connecter un", "lecteur réseau"]} width="w-[82px]" menu />
          <RibbonButton icon={<AddPlaceIcon />} lines={["Ajouter un", "emplacement réseau"]} width="w-[114px]" />
        </RibbonGroup>
        <RibbonGroup label="Système" width="w-[301px]" inset="pl-[4px]">
          <RibbonButton icon={<GearTile />} lines={["Ouvrir les", "paramètres"]} width="w-[62px]" />
          <div className="-mt-[3px] ml-[3px] flex flex-col">
            <SmallCommand icon={<UninstallIcon />} label="Désinstaller ou modifier un programme" />
            <SmallCommand icon={<SystemIcon />} label="Propriétés système" />
            <SmallCommand icon={<ManageIcon />} label="Gérer" />
          </div>
        </RibbonGroup>
      </div>

      <div className="flex h-10 shrink-0 items-center pr-3">
        <button aria-label="Précédent" className="ml-[13px]">
          <svg width="12" height="11" viewBox="0 0 12 11"><path d="M5.5 0.8L1 5.5l4.5 4.7M1 5.5h11" fill="none" stroke="#6b6b6b" strokeWidth="1.5" /></svg>
        </button>
        <button aria-label="Suivant" disabled className="ml-[18px]">
          <svg width="12" height="11" viewBox="0 0 12 11"><path d="M6.5 0.8L11 5.5l-4.5 4.7M11 5.5H0" fill="none" stroke="#d2d2d2" strokeWidth="1.5" /></svg>
        </button>
        <button aria-label="Emplacements récents" className="ml-[14px]">
          <svg width="7" height="5" viewBox="0 0 7 5"><path d="M0.5 0.8l3 3 3-3" fill="none" stroke="#6b6b6b" strokeWidth="1.4" /></svg>
        </button>
        <button aria-label="Monter" className="ml-[11px]">
          <svg width="12" height="12" viewBox="0 0 12 12"><path d="M1 5.8L6 1l5 4.8M6 1v11" fill="none" stroke="#6b6b6b" strokeWidth="1.5" /></svg>
        </button>
        <div className="ml-[7px] flex h-[30px] flex-1 items-center border border-[#d9d9d9] pl-[2px]">
          <Monitor />
          <svg width="5" height="7" viewBox="0 0 5 7" className="ml-[7px]"><path d="M0.8 0.5l3 3-3 3" fill="none" stroke="#6b6b6b" strokeWidth="1.4" /></svg>
          <span className="ml-[9px] flex-1">Ce PC</span>
          <button aria-label="Historique" className="px-[10px]">
            <svg width="9" height="6" viewBox="0 0 9 6"><path d="M0.7 0.8l3.8 3.8 3.8-3.8" fill="none" stroke="#6b6b6b" strokeWidth="1.7" /></svg>
          </button>
          <button aria-label="Actualiser" className="flex h-full w-[30px] items-center justify-center border-l border-[#d9d9d9]">
            <svg width="11" height="11" viewBox="0 0 11 11" fill="none" stroke="#6b6b6b" strokeWidth="1.5"><path d="M8.5 2.8a4 4 0 1 1-5.8 0.2" /><path d="M1 0.8h4v4" /></svg>
          </button>
        </div>
        <label className="ml-3 flex h-[30px] w-[202px] items-center gap-[13px] border border-[#d9d9d9] pl-[14px]">
          <Magnifier size={13} color="#7a7a7a" />
          <input aria-label="Rechercher dans Ce PC" placeholder="Rechercher dans : Ce PC" className="w-full bg-transparent placeholder:text-[#6d6d6d]" />
        </label>
      </div>

      <div className="flex min-h-0 flex-1">
        <NavPane />
        <Content />
      </div>

      <div className="flex h-[23px] shrink-0 items-center pr-2 pl-[14px] text-[#1e395b]">
        12 élément(s)
        <span className="ml-[10px] h-3 w-px bg-[#efefef]" />
        <div className="ml-auto flex items-center gap-[7px]">
          <button aria-label="Détails">
            <svg width="16" height="13" viewBox="0 0 16 13" fill="none" stroke="#8a8f94">
              <rect x="0.5" y="0.5" width="4" height="12" />
              <path d="M0.5 4.5h4M0.5 8.5h4M6 2.5h4M12 2.5h4M6 6.5h4M12 6.5h4M6 10.5h4M12 10.5h4" />
              <path d="M2 10.5h1" stroke="#d33" />
            </svg>
          </button>
          <button aria-label="Grandes icônes"><Picture size={14} /></button>
        </div>
      </div>

      <Taskbar />
      <ConfigDialog />
    </div>
  );
}
